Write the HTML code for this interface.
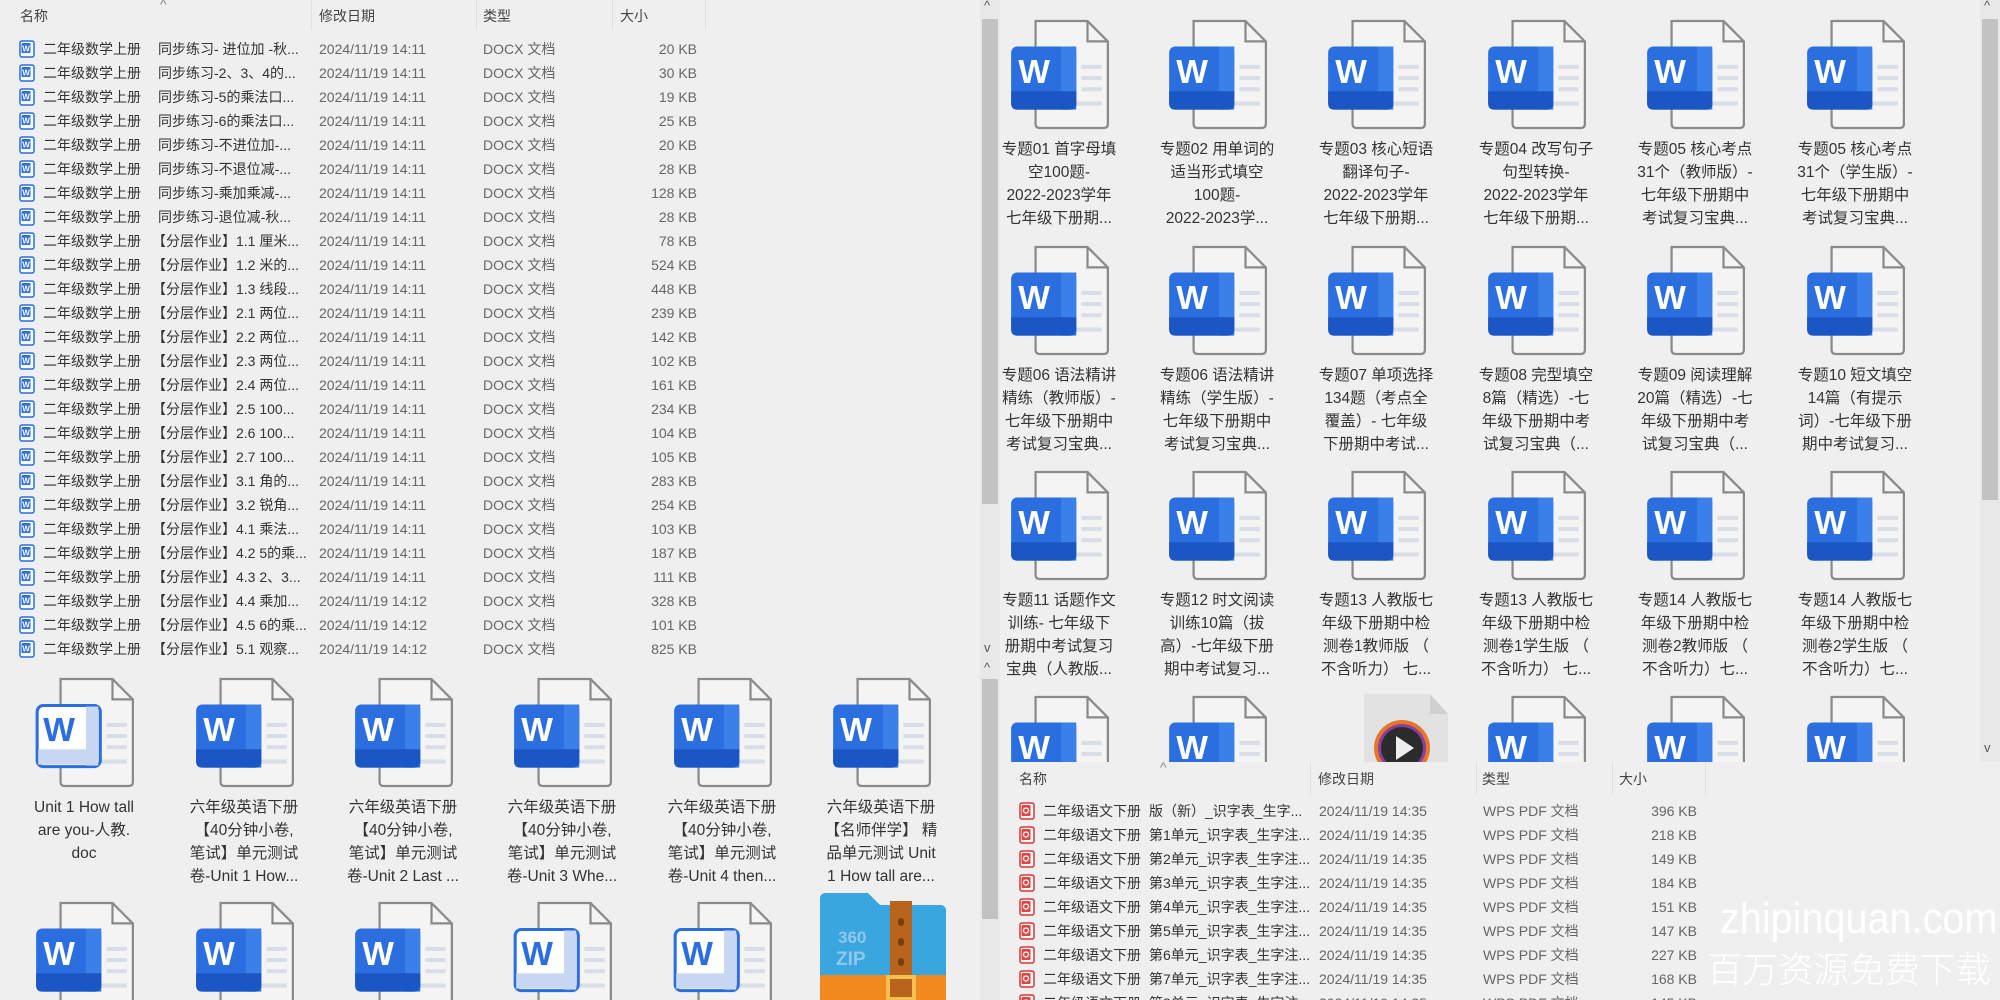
<!DOCTYPE html>
<html><head><meta charset="utf-8"><style>
*{margin:0;padding:0;box-sizing:border-box}
body{width:2000px;height:1000px;overflow:hidden;background:#efefef;position:relative;font-family:"Liberation Sans","Noto Sans CJK SC",sans-serif;color:#333}
.abs{position:absolute}
.hd{position:absolute;font-size:14px;color:#444;top:6px}
.sep{position:absolute;width:1px;background:#e0e0e0}
.row{position:absolute;left:0;height:24px;font-size:14px;line-height:24px;white-space:nowrap}
.row span{position:absolute}
.row .d{color:#666}.row .t{color:#666}.row .s{color:#666;text-align:right;width:80px}
.it{position:absolute;width:160px;text-align:center;font-size:15.5px;line-height:23px;color:#333}
.it svg{display:block;margin:0 auto 8px}
.pane{position:absolute;overflow:hidden}
.sb{position:absolute;background:#e8e8e8}
.th{position:absolute;background:#c2c2c2}
.wm{position:absolute;color:#fff;white-space:nowrap}
</style></head><body>
<svg width="0" height="0" style="position:absolute">
<defs>
<symbol id="wd" viewBox="0 0 100 110">
<path d="M27 3 H78 L98 23 V104 Q98 108 94 108 H31 Q27 108 27 104 Z" fill="#f4f4f4" stroke="#8a8a8a" stroke-width="2.2"/>
<path d="M78 3 V23 H98" fill="none" stroke="#8a8a8a" stroke-width="2.2"/>
<rect x="72" y="46" width="20" height="4" fill="#d8dde6"/><rect x="72" y="57" width="20" height="4" fill="#d8dde6"/><rect x="72" y="68" width="20" height="4" fill="#d8dde6"/><rect x="40" y="82" width="52" height="4" fill="#d8dde6"/>
<rect x="3" y="28" width="64" height="62" rx="6" fill="#2a6ee0"/>
<rect x="52" y="28" width="15" height="62" fill="#3b7fe8"/>
<path d="M3 72 H67 V84 Q67 90 61 90 H9 Q3 90 3 84 Z" fill="#1a56c4"/>
<text x="10" y="64" font-family="Liberation Sans" font-weight="bold" font-size="33" fill="#fff">W</text>
</symbol>
<symbol id="wo" viewBox="0 0 100 110">
<path d="M27 3 H78 L98 23 V104 Q98 108 94 108 H31 Q27 108 27 104 Z" fill="#f4f4f4" stroke="#8a8a8a" stroke-width="2.2"/>
<path d="M78 3 V23 H98" fill="none" stroke="#8a8a8a" stroke-width="2.2"/>
<rect x="72" y="46" width="20" height="4" fill="#d8dde6"/><rect x="72" y="57" width="20" height="4" fill="#d8dde6"/><rect x="72" y="68" width="20" height="4" fill="#d8dde6"/><rect x="40" y="82" width="52" height="4" fill="#d8dde6"/>
<rect x="4" y="29" width="62" height="60" rx="6" fill="#fff" stroke="#2a6ee0" stroke-width="3"/>
<rect x="52" y="30" width="12" height="58" fill="#c9d8f2"/>
<rect x="5" y="72" width="59" height="15" fill="#c9d8f2"/>
<text x="10" y="64" font-family="Liberation Sans" font-weight="bold" font-size="33" fill="#2a6ee0">W</text>
</symbol>
<symbol id="sw" viewBox="0 0 16 18">
<rect x="1" y="1" width="14" height="16" rx="2" fill="#fff" stroke="#2a6ee0" stroke-width="1.5"/>
<rect x="2.5" y="3" width="9" height="10" rx="1" fill="#2a6ee0"/>
<text x="3.3" y="11.5" font-family="Liberation Sans" font-weight="bold" font-size="8" fill="#fff">W</text>
</symbol>
<symbol id="sp" viewBox="0 0 16 18">
<rect x="1" y="1" width="14" height="16" rx="2" fill="#fff" stroke="#d33" stroke-width="1.5"/>
<rect x="2.5" y="3" width="9" height="11" rx="1" fill="#e04545"/>
<circle cx="7" cy="8.5" r="2.5" fill="none" stroke="#fff" stroke-width="1.3"/>
</symbol>
</defs></svg>

<!-- LEFT TOP LIST -->
<div class="pane" style="left:0;top:0;width:980px;height:662px">
<span class="hd" style="left:20px">名称</span><span class="hd" style="left:160px;top:-4px;color:#888">^</span>
<span class="hd" style="left:319px">修改日期</span><span class="hd" style="left:483px">类型</span><span class="hd" style="left:620px">大小</span>
<div class="sep" style="left:311px;top:0;height:30px"></div><div class="sep" style="left:476px;top:0;height:30px"></div><div class="sep" style="left:612px;top:0;height:30px"></div><div class="sep" style="left:705px;top:0;height:30px"></div>
<div class="row" style="top:37px"><svg class="abs" style="left:19px;top:3px" width="16" height="18"><use href="#sw"/></svg><span style="left:43px">二年级数学上册</span><span style="left:158px">同步练习- 进位加 -秋...</span><span class="d" style="left:319px">2024/11/19 14:11</span><span class="t" style="left:483px">DOCX 文档</span><span class="s" style="left:617px">20 KB</span></div>
<div class="row" style="top:61px"><svg class="abs" style="left:19px;top:3px" width="16" height="18"><use href="#sw"/></svg><span style="left:43px">二年级数学上册</span><span style="left:158px">同步练习-2、3、4的...</span><span class="d" style="left:319px">2024/11/19 14:11</span><span class="t" style="left:483px">DOCX 文档</span><span class="s" style="left:617px">30 KB</span></div>
<div class="row" style="top:85px"><svg class="abs" style="left:19px;top:3px" width="16" height="18"><use href="#sw"/></svg><span style="left:43px">二年级数学上册</span><span style="left:158px">同步练习-5的乘法口...</span><span class="d" style="left:319px">2024/11/19 14:11</span><span class="t" style="left:483px">DOCX 文档</span><span class="s" style="left:617px">19 KB</span></div>
<div class="row" style="top:109px"><svg class="abs" style="left:19px;top:3px" width="16" height="18"><use href="#sw"/></svg><span style="left:43px">二年级数学上册</span><span style="left:158px">同步练习-6的乘法口...</span><span class="d" style="left:319px">2024/11/19 14:11</span><span class="t" style="left:483px">DOCX 文档</span><span class="s" style="left:617px">25 KB</span></div>
<div class="row" style="top:133px"><svg class="abs" style="left:19px;top:3px" width="16" height="18"><use href="#sw"/></svg><span style="left:43px">二年级数学上册</span><span style="left:158px">同步练习-不进位加-...</span><span class="d" style="left:319px">2024/11/19 14:11</span><span class="t" style="left:483px">DOCX 文档</span><span class="s" style="left:617px">20 KB</span></div>
<div class="row" style="top:157px"><svg class="abs" style="left:19px;top:3px" width="16" height="18"><use href="#sw"/></svg><span style="left:43px">二年级数学上册</span><span style="left:158px">同步练习-不退位减-...</span><span class="d" style="left:319px">2024/11/19 14:11</span><span class="t" style="left:483px">DOCX 文档</span><span class="s" style="left:617px">28 KB</span></div>
<div class="row" style="top:181px"><svg class="abs" style="left:19px;top:3px" width="16" height="18"><use href="#sw"/></svg><span style="left:43px">二年级数学上册</span><span style="left:158px">同步练习-乘加乘减-...</span><span class="d" style="left:319px">2024/11/19 14:11</span><span class="t" style="left:483px">DOCX 文档</span><span class="s" style="left:617px">128 KB</span></div>
<div class="row" style="top:205px"><svg class="abs" style="left:19px;top:3px" width="16" height="18"><use href="#sw"/></svg><span style="left:43px">二年级数学上册</span><span style="left:158px">同步练习-退位减-秋...</span><span class="d" style="left:319px">2024/11/19 14:11</span><span class="t" style="left:483px">DOCX 文档</span><span class="s" style="left:617px">28 KB</span></div>
<div class="row" style="top:229px"><svg class="abs" style="left:19px;top:3px" width="16" height="18"><use href="#sw"/></svg><span style="left:43px">二年级数学上册</span><span style="left:152px">【分层作业】1.1 厘米...</span><span class="d" style="left:319px">2024/11/19 14:11</span><span class="t" style="left:483px">DOCX 文档</span><span class="s" style="left:617px">78 KB</span></div>
<div class="row" style="top:253px"><svg class="abs" style="left:19px;top:3px" width="16" height="18"><use href="#sw"/></svg><span style="left:43px">二年级数学上册</span><span style="left:152px">【分层作业】1.2 米的...</span><span class="d" style="left:319px">2024/11/19 14:11</span><span class="t" style="left:483px">DOCX 文档</span><span class="s" style="left:617px">524 KB</span></div>
<div class="row" style="top:277px"><svg class="abs" style="left:19px;top:3px" width="16" height="18"><use href="#sw"/></svg><span style="left:43px">二年级数学上册</span><span style="left:152px">【分层作业】1.3 线段...</span><span class="d" style="left:319px">2024/11/19 14:11</span><span class="t" style="left:483px">DOCX 文档</span><span class="s" style="left:617px">448 KB</span></div>
<div class="row" style="top:301px"><svg class="abs" style="left:19px;top:3px" width="16" height="18"><use href="#sw"/></svg><span style="left:43px">二年级数学上册</span><span style="left:152px">【分层作业】2.1 两位...</span><span class="d" style="left:319px">2024/11/19 14:11</span><span class="t" style="left:483px">DOCX 文档</span><span class="s" style="left:617px">239 KB</span></div>
<div class="row" style="top:325px"><svg class="abs" style="left:19px;top:3px" width="16" height="18"><use href="#sw"/></svg><span style="left:43px">二年级数学上册</span><span style="left:152px">【分层作业】2.2 两位...</span><span class="d" style="left:319px">2024/11/19 14:11</span><span class="t" style="left:483px">DOCX 文档</span><span class="s" style="left:617px">142 KB</span></div>
<div class="row" style="top:349px"><svg class="abs" style="left:19px;top:3px" width="16" height="18"><use href="#sw"/></svg><span style="left:43px">二年级数学上册</span><span style="left:152px">【分层作业】2.3 两位...</span><span class="d" style="left:319px">2024/11/19 14:11</span><span class="t" style="left:483px">DOCX 文档</span><span class="s" style="left:617px">102 KB</span></div>
<div class="row" style="top:373px"><svg class="abs" style="left:19px;top:3px" width="16" height="18"><use href="#sw"/></svg><span style="left:43px">二年级数学上册</span><span style="left:152px">【分层作业】2.4 两位...</span><span class="d" style="left:319px">2024/11/19 14:11</span><span class="t" style="left:483px">DOCX 文档</span><span class="s" style="left:617px">161 KB</span></div>
<div class="row" style="top:397px"><svg class="abs" style="left:19px;top:3px" width="16" height="18"><use href="#sw"/></svg><span style="left:43px">二年级数学上册</span><span style="left:152px">【分层作业】2.5 100...</span><span class="d" style="left:319px">2024/11/19 14:11</span><span class="t" style="left:483px">DOCX 文档</span><span class="s" style="left:617px">234 KB</span></div>
<div class="row" style="top:421px"><svg class="abs" style="left:19px;top:3px" width="16" height="18"><use href="#sw"/></svg><span style="left:43px">二年级数学上册</span><span style="left:152px">【分层作业】2.6 100...</span><span class="d" style="left:319px">2024/11/19 14:11</span><span class="t" style="left:483px">DOCX 文档</span><span class="s" style="left:617px">104 KB</span></div>
<div class="row" style="top:445px"><svg class="abs" style="left:19px;top:3px" width="16" height="18"><use href="#sw"/></svg><span style="left:43px">二年级数学上册</span><span style="left:152px">【分层作业】2.7 100...</span><span class="d" style="left:319px">2024/11/19 14:11</span><span class="t" style="left:483px">DOCX 文档</span><span class="s" style="left:617px">105 KB</span></div>
<div class="row" style="top:469px"><svg class="abs" style="left:19px;top:3px" width="16" height="18"><use href="#sw"/></svg><span style="left:43px">二年级数学上册</span><span style="left:152px">【分层作业】3.1 角的...</span><span class="d" style="left:319px">2024/11/19 14:11</span><span class="t" style="left:483px">DOCX 文档</span><span class="s" style="left:617px">283 KB</span></div>
<div class="row" style="top:493px"><svg class="abs" style="left:19px;top:3px" width="16" height="18"><use href="#sw"/></svg><span style="left:43px">二年级数学上册</span><span style="left:152px">【分层作业】3.2 锐角...</span><span class="d" style="left:319px">2024/11/19 14:11</span><span class="t" style="left:483px">DOCX 文档</span><span class="s" style="left:617px">254 KB</span></div>
<div class="row" style="top:517px"><svg class="abs" style="left:19px;top:3px" width="16" height="18"><use href="#sw"/></svg><span style="left:43px">二年级数学上册</span><span style="left:152px">【分层作业】4.1 乘法...</span><span class="d" style="left:319px">2024/11/19 14:11</span><span class="t" style="left:483px">DOCX 文档</span><span class="s" style="left:617px">103 KB</span></div>
<div class="row" style="top:541px"><svg class="abs" style="left:19px;top:3px" width="16" height="18"><use href="#sw"/></svg><span style="left:43px">二年级数学上册</span><span style="left:152px">【分层作业】4.2 5的乘...</span><span class="d" style="left:319px">2024/11/19 14:11</span><span class="t" style="left:483px">DOCX 文档</span><span class="s" style="left:617px">187 KB</span></div>
<div class="row" style="top:565px"><svg class="abs" style="left:19px;top:3px" width="16" height="18"><use href="#sw"/></svg><span style="left:43px">二年级数学上册</span><span style="left:152px">【分层作业】4.3 2、3...</span><span class="d" style="left:319px">2024/11/19 14:11</span><span class="t" style="left:483px">DOCX 文档</span><span class="s" style="left:617px">111 KB</span></div>
<div class="row" style="top:589px"><svg class="abs" style="left:19px;top:3px" width="16" height="18"><use href="#sw"/></svg><span style="left:43px">二年级数学上册</span><span style="left:152px">【分层作业】4.4 乘加...</span><span class="d" style="left:319px">2024/11/19 14:12</span><span class="t" style="left:483px">DOCX 文档</span><span class="s" style="left:617px">328 KB</span></div>
<div class="row" style="top:613px"><svg class="abs" style="left:19px;top:3px" width="16" height="18"><use href="#sw"/></svg><span style="left:43px">二年级数学上册</span><span style="left:152px">【分层作业】4.5 6的乘...</span><span class="d" style="left:319px">2024/11/19 14:12</span><span class="t" style="left:483px">DOCX 文档</span><span class="s" style="left:617px">101 KB</span></div>
<div class="row" style="top:637px"><svg class="abs" style="left:19px;top:3px" width="16" height="18"><use href="#sw"/></svg><span style="left:43px">二年级数学上册</span><span style="left:152px">【分层作业】5.1 观察...</span><span class="d" style="left:319px">2024/11/19 14:12</span><span class="t" style="left:483px">DOCX 文档</span><span class="s" style="left:617px">825 KB</span></div>
</div>
<div class="sb" style="left:980px;top:0;width:20px;height:662px"></div>
<div class="th" style="left:982px;top:19px;width:16px;height:485px"></div>
<div class="abs" style="left:984px;top:-2px;font-size:13px;color:#555">^</div>
<div class="abs" style="left:984px;top:640px;font-size:13px;color:#555">v</div>

<!-- LEFT BOTTOM GRID -->
<div class="pane" style="left:0;top:662px;width:980px;height:338px">
<div class="it" style="left:4px;top:14px"><svg width="102" height="112"><use href="#wo"/></svg>Unit 1 How tall<br>are you-人教.<br>doc</div>
<div class="it" style="left:164px;top:14px"><svg width="102" height="112"><use href="#wd"/></svg>六年级英语下册<br>【40分钟小卷,<br>笔试】单元测试<br>卷-Unit 1 How...</div>
<div class="it" style="left:323px;top:14px"><svg width="102" height="112"><use href="#wd"/></svg>六年级英语下册<br>【40分钟小卷,<br>笔试】单元测试<br>卷-Unit 2 Last ...</div>
<div class="it" style="left:482px;top:14px"><svg width="102" height="112"><use href="#wd"/></svg>六年级英语下册<br>【40分钟小卷,<br>笔试】单元测试<br>卷-Unit 3 Whe...</div>
<div class="it" style="left:642px;top:14px"><svg width="102" height="112"><use href="#wd"/></svg>六年级英语下册<br>【40分钟小卷,<br>笔试】单元测试<br>卷-Unit 4 then...</div>
<div class="it" style="left:801px;top:14px"><svg width="102" height="112"><use href="#wd"/></svg>六年级英语下册<br>【名师伴学】 精<br>品单元测试 Unit<br>1 How tall are...</div>
<div class="it" style="left:4px;top:238px"><svg width="102" height="112"><use href="#wd"/></svg></div>
<div class="it" style="left:164px;top:238px"><svg width="102" height="112"><use href="#wd"/></svg></div>
<div class="it" style="left:323px;top:238px"><svg width="102" height="112"><use href="#wd"/></svg></div>
<div class="it" style="left:482px;top:238px"><svg width="102" height="112"><use href="#wo"/></svg></div>
<div class="it" style="left:642px;top:238px"><svg width="102" height="112"><use href="#wo"/></svg></div>
<svg class="abs" style="left:818px;top:231px" width="130" height="110" viewBox="0 0 130 110">
<path d="M8 0 H50 L62 12 H122 Q128 12 128 18 V110 H2 V6 Q2 0 8 0Z" fill="#3aa6e0"/>
<rect x="2" y="82" width="126" height="30" fill="#f08a1c"/>
<rect x="72" y="8" width="22" height="102" fill="#b8641c"/>
<rect x="80" y="25" width="6" height="8" rx="3" fill="#7a3d0e"/><rect x="80" y="45" width="6" height="8" rx="3" fill="#7a3d0e"/><rect x="80" y="65" width="6" height="8" rx="3" fill="#7a3d0e"/>
<rect x="70" y="84" width="26" height="22" fill="none" stroke="#f4c050" stroke-width="4"/>
<text x="20" y="50" font-family="Liberation Sans" font-size="17" fill="#8fc8ea" font-weight="bold">360</text>
<text x="18" y="72" font-family="Liberation Sans" font-size="19" fill="#8fc8ea" font-weight="bold">ZIP</text>
</svg>
</div>
<div class="sb" style="left:980px;top:662px;width:20px;height:338px"></div>
<div class="th" style="left:982px;top:679px;width:16px;height:240px"></div>
<div class="abs" style="left:984px;top:660px;font-size:13px;color:#555">^</div>

<!-- RIGHT TOP GRID -->
<div class="pane" style="left:1000px;top:0;width:980px;height:762px">
<div class="it" style="left:-21px;top:18px"><svg width="102" height="112"><use href="#wd"/></svg>专题01 首字母填<br>空100题-<br>2022-2023学年<br>七年级下册期...</div>
<div class="it" style="left:137px;top:18px"><svg width="102" height="112"><use href="#wd"/></svg>专题02 用单词的<br>适当形式填空<br>100题-<br>2022-2023学...</div>
<div class="it" style="left:296px;top:18px"><svg width="102" height="112"><use href="#wd"/></svg>专题03 核心短语<br>翻译句子-<br>2022-2023学年<br>七年级下册期...</div>
<div class="it" style="left:456px;top:18px"><svg width="102" height="112"><use href="#wd"/></svg>专题04 改写句子<br>句型转换-<br>2022-2023学年<br>七年级下册期...</div>
<div class="it" style="left:615px;top:18px"><svg width="102" height="112"><use href="#wd"/></svg>专题05 核心考点<br>31个（教师版）-<br>七年级下册期中<br>考试复习宝典...</div>
<div class="it" style="left:775px;top:18px"><svg width="102" height="112"><use href="#wd"/></svg>专题05 核心考点<br>31个（学生版）-<br>七年级下册期中<br>考试复习宝典...</div>

<div class="it" style="left:-21px;top:244px"><svg width="102" height="112"><use href="#wd"/></svg>专题06 语法精讲<br>精练（教师版）-<br>七年级下册期中<br>考试复习宝典...</div>
<div class="it" style="left:137px;top:244px"><svg width="102" height="112"><use href="#wd"/></svg>专题06 语法精讲<br>精练（学生版）-<br>七年级下册期中<br>考试复习宝典...</div>
<div class="it" style="left:296px;top:244px"><svg width="102" height="112"><use href="#wd"/></svg>专题07 单项选择<br>134题（考点全<br>覆盖）- 七年级<br>下册期中考试...</div>
<div class="it" style="left:456px;top:244px"><svg width="102" height="112"><use href="#wd"/></svg>专题08 完型填空<br>8篇（精选）-七<br>年级下册期中考<br>试复习宝典（...</div>
<div class="it" style="left:615px;top:244px"><svg width="102" height="112"><use href="#wd"/></svg>专题09 阅读理解<br>20篇（精选）-七<br>年级下册期中考<br>试复习宝典（...</div>
<div class="it" style="left:775px;top:244px"><svg width="102" height="112"><use href="#wd"/></svg>专题10 短文填空<br>14篇（有提示<br>词）-七年级下册<br>期中考试复习...</div>

<div class="it" style="left:-21px;top:469px"><svg width="102" height="112"><use href="#wd"/></svg>专题11 话题作文<br>训练- 七年级下<br>册期中考试复习<br>宝典（人教版...</div>
<div class="it" style="left:137px;top:469px"><svg width="102" height="112"><use href="#wd"/></svg>专题12 时文阅读<br>训练10篇（拔<br>高）-七年级下册<br>期中考试复习...</div>
<div class="it" style="left:296px;top:469px"><svg width="102" height="112"><use href="#wd"/></svg>专题13 人教版七<br>年级下册期中检<br>测卷1教师版 （<br>不含听力） 七...</div>
<div class="it" style="left:456px;top:469px"><svg width="102" height="112"><use href="#wd"/></svg>专题13 人教版七<br>年级下册期中检<br>测卷1学生版 （<br>不含听力） 七...</div>
<div class="it" style="left:615px;top:469px"><svg width="102" height="112"><use href="#wd"/></svg>专题14 人教版七<br>年级下册期中检<br>测卷2教师版 （<br>不含听力）七...</div>
<div class="it" style="left:775px;top:469px"><svg width="102" height="112"><use href="#wd"/></svg>专题14 人教版七<br>年级下册期中检<br>测卷2学生版 （<br>不含听力）七...</div>

<div class="it" style="left:-21px;top:694px"><svg width="102" height="112"><use href="#wd"/></svg></div>
<div class="it" style="left:137px;top:694px"><svg width="102" height="112"><use href="#wd"/></svg></div>
<svg class="abs" style="left:362px;top:694px" width="90" height="80" viewBox="0 0 90 80">
<path d="M2 0 H68 L86 20 V80 H2Z" fill="#e2e2e2"/><path d="M68 0 V20 H86" fill="#cfcfcf"/>
<circle cx="40" cy="54" r="28" fill="#e6762a"/><circle cx="40" cy="54" r="24" fill="#8a3fa0"/><circle cx="40" cy="54" r="21" fill="#2b2b2b"/>
<path d="M34 42 L52 54 L34 66Z" fill="#eee"/>
</svg>
<div class="it" style="left:456px;top:694px"><svg width="102" height="112"><use href="#wd"/></svg></div>
<div class="it" style="left:615px;top:694px"><svg width="102" height="112"><use href="#wd"/></svg></div>
<div class="it" style="left:775px;top:694px"><svg width="102" height="112"><use href="#wd"/></svg></div>
</div>
<div class="sb" style="left:1980px;top:0;width:20px;height:762px"></div>
<div class="th" style="left:1982px;top:19px;width:16px;height:481px"></div>
<div class="abs" style="left:1984px;top:-2px;font-size:13px;color:#555">^</div>
<div class="abs" style="left:1984px;top:740px;font-size:13px;color:#555">v</div>

<!-- RIGHT BOTTOM LIST -->
<div class="pane" style="left:1000px;top:762px;width:1000px;height:238px;background:#efefef">
<span class="hd" style="left:19px;top:7px">名称</span><span class="hd" style="left:160px;top:-3px;color:#888">^</span>
<span class="hd" style="left:318px;top:7px">修改日期</span><span class="hd" style="left:482px;top:7px">类型</span><span class="hd" style="left:619px;top:7px">大小</span>
<div class="sep" style="left:310px;top:0;height:32px"></div><div class="sep" style="left:476px;top:0;height:32px"></div><div class="sep" style="left:612px;top:0;height:32px"></div><div class="sep" style="left:705px;top:0;height:32px"></div>
<div class="row" style="top:37px"><svg class="abs" style="left:19px;top:3px" width="16" height="18"><use href="#sp"/></svg><span style="left:43px">二年级语文下册</span><span style="left:149px">版（新）_识字表_生字...</span><span class="d" style="left:319px">2024/11/19 14:35</span><span class="t" style="left:483px">WPS PDF 文档</span><span class="s" style="left:617px">396 KB</span></div>
<div class="row" style="top:61px"><svg class="abs" style="left:19px;top:3px" width="16" height="18"><use href="#sp"/></svg><span style="left:43px">二年级语文下册</span><span style="left:149px">第1单元_识字表_生字注...</span><span class="d" style="left:319px">2024/11/19 14:35</span><span class="t" style="left:483px">WPS PDF 文档</span><span class="s" style="left:617px">218 KB</span></div>
<div class="row" style="top:85px"><svg class="abs" style="left:19px;top:3px" width="16" height="18"><use href="#sp"/></svg><span style="left:43px">二年级语文下册</span><span style="left:149px">第2单元_识字表_生字注...</span><span class="d" style="left:319px">2024/11/19 14:35</span><span class="t" style="left:483px">WPS PDF 文档</span><span class="s" style="left:617px">149 KB</span></div>
<div class="row" style="top:109px"><svg class="abs" style="left:19px;top:3px" width="16" height="18"><use href="#sp"/></svg><span style="left:43px">二年级语文下册</span><span style="left:149px">第3单元_识字表_生字注...</span><span class="d" style="left:319px">2024/11/19 14:35</span><span class="t" style="left:483px">WPS PDF 文档</span><span class="s" style="left:617px">184 KB</span></div>
<div class="row" style="top:133px"><svg class="abs" style="left:19px;top:3px" width="16" height="18"><use href="#sp"/></svg><span style="left:43px">二年级语文下册</span><span style="left:149px">第4单元_识字表_生字注...</span><span class="d" style="left:319px">2024/11/19 14:35</span><span class="t" style="left:483px">WPS PDF 文档</span><span class="s" style="left:617px">151 KB</span></div>
<div class="row" style="top:157px"><svg class="abs" style="left:19px;top:3px" width="16" height="18"><use href="#sp"/></svg><span style="left:43px">二年级语文下册</span><span style="left:149px">第5单元_识字表_生字注...</span><span class="d" style="left:319px">2024/11/19 14:35</span><span class="t" style="left:483px">WPS PDF 文档</span><span class="s" style="left:617px">147 KB</span></div>
<div class="row" style="top:181px"><svg class="abs" style="left:19px;top:3px" width="16" height="18"><use href="#sp"/></svg><span style="left:43px">二年级语文下册</span><span style="left:149px">第6单元_识字表_生字注...</span><span class="d" style="left:319px">2024/11/19 14:35</span><span class="t" style="left:483px">WPS PDF 文档</span><span class="s" style="left:617px">227 KB</span></div>
<div class="row" style="top:205px"><svg class="abs" style="left:19px;top:3px" width="16" height="18"><use href="#sp"/></svg><span style="left:43px">二年级语文下册</span><span style="left:149px">第7单元_识字表_生字注...</span><span class="d" style="left:319px">2024/11/19 14:35</span><span class="t" style="left:483px">WPS PDF 文档</span><span class="s" style="left:617px">168 KB</span></div>
<div class="row" style="top:229px"><svg class="abs" style="left:19px;top:3px" width="16" height="18"><use href="#sp"/></svg><span style="left:43px">二年级语文下册</span><span style="left:149px">第8单元_识字表_生字注...</span><span class="d" style="left:319px">2024/11/19 14:35</span><span class="t" style="left:483px">WPS PDF 文档</span><span class="s" style="left:617px">145 KB</span></div>
</div>

<div class="wm" style="left:1720px;top:894px;font-size:44px;line-height:50px;font-family:'Liberation Sans',sans-serif;transform:scaleX(0.9);transform-origin:0 0">zhipinquan.com</div>
<div class="wm" style="left:1707px;top:946px;font-size:35.5px;line-height:44px;font-family:'Noto Sans CJK SC',sans-serif;font-weight:300">百万资源免费下载</div>
</body></html>
